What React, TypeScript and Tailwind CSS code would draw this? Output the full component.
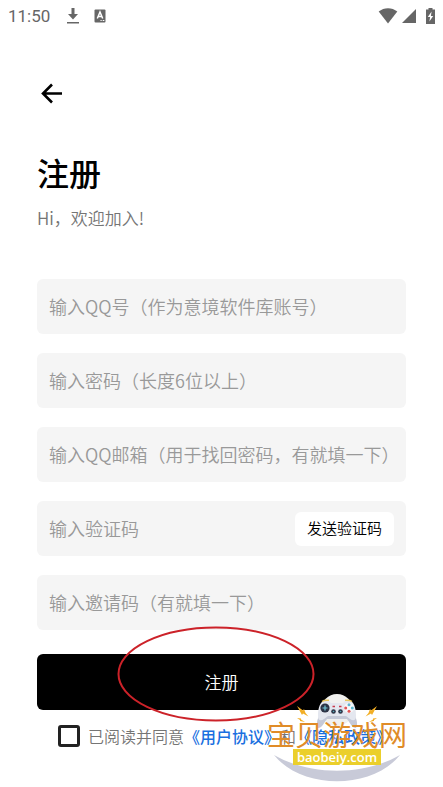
import { useState } from 'react'

const fields = [
  { id: "qq", type: "text", placeholder: "输入QQ号（作为意境软件库账号）" },
  { id: "password", type: "password", placeholder: "输入密码（长度6位以上）" },
  { id: "email", type: "email", placeholder: "输入QQ邮箱（用于找回密码，有就填一下）" },
  { id: "code", type: "text", placeholder: "输入验证码", action: "发送验证码" },
  { id: "invite", type: "text", placeholder: "输入邀请码（有就填一下）" },
]

function StatusBar() {
  return (
    <div className="flex h-8 items-center justify-between px-2 font-[Roboto,sans-serif] text-[#666666]">
      <div className="flex items-center">
        <span className="text-[17px] leading-5">11:50</span>
        <svg className="ml-4 h-4 w-3.5" viewBox="0 0 14 16" fill="currentColor">
          <path d="M5.5 0h3v6H12L7 11.5 2 6h3.5zM1 14h12v1.6H1z" />
        </svg>
        <svg className="ml-3.5 h-3.5 w-3" viewBox="0 0 12 14">
          <rect x="0.5" y="0.5" width="11" height="13" rx="1" fill="currentColor" />
          <path d="M3.3 9.5 6 3l2.7 6.5M4.3 7.4h3.4" fill="none" stroke="#fff" strokeWidth="1.5" />
          <path d="M6.5 11.5h1.2M8.7 11.5h1.6" stroke="#fff" strokeWidth="1" />
        </svg>
      </div>
      <div className="flex items-center">
        <svg className="h-4 w-5" viewBox="0 0 20 16" fill="currentColor">
          <path d="M0.7 3.6C6-1 14-1 19.3 3.6L10 15.4z" />
        </svg>
        <svg className="ml-1 h-3.5 w-3.5" viewBox="0 0 14 14" fill="currentColor">
          <path d="M14 0v14H0z" />
        </svg>
        <svg className="ml-2.5 h-4 w-[9px]" viewBox="0 0 9 16">
          <path d="M2.5 0h4v1.6H9V16H0V1.6h2.5z" fill="currentColor" />
          <path d="M5.6 3.6 1.8 9h2.3l-.7 4.4L7.2 8H4.9z" fill="#fff" />
        </svg>
      </div>
    </div>
  )
}

function Gamepad() {
  return (
    <svg className="h-10 w-20" viewBox="0 0 80 40">
      {/* Sparks */}
      <g fill="#f2ae24">
        <path d="m0 12 6 4.5 1-1.5 1.5 4 3 3.5-5.500-3-1 1.5zM0 24l4 .5v1l4 2.5-5-1v-1z" />
        <path d="m80 12-6 4.5-1-1.5-1.5 4-3 3.5 5.5-3 1 1.5zM80 24l-4 .5v1l-4 2.5 5-1v-1z" />
      </g>
      <ellipse cx="40" cy="16" rx="16" ry="16" fill="#f1f1ef" />
      <path d="M22 22c-2 4-3 9-1 12 4 0 6-5 9-9h20c3 4 5 9 9 9 2-3 1-8-1-12l-4-8H26z" fill="#c5c9d7" />
      <path d="M26 7h6l2 2h12l2-2h6c4 3 5 9 5 15 0 5-3 5-6 3l-4-3H31l-4 3c-3 2-6 2-6-3 0-6 1-12 5-15z" fill="#e4e7ef" />
      <path d="M25 7.5c2-1.500 4-1.500 7-1.2M55 7.5c-2-1.500-4-1.500-7-1.2" stroke="#e9c65b" strokeWidth="1.4" fill="none" />
      <circle cx="28" cy="14" r="4.6" fill="#2d3446" />
      <path d="M28 11.5v5M25.5 14h5" stroke="#73c6d6" strokeWidth="1.2" />
      <circle cx="52" cy="14" r="5" fill="#f7f8fa" />
      <circle cx="52" cy="10.7" r="1.5" fill="#5bb7d0" />
      <circle cx="52" cy="17.3" r="1.5" fill="#e25555" />
      <circle cx="48.7" cy="14" r="1.5" fill="#e25555" />
      <circle cx="55.3" cy="14" r="1.5" fill="#5bb7d0" />
      <path d="M35.5 12.5H38M42 12.5h2.5" stroke="#c93b4c" strokeWidth="1.4" />
      <circle cx="36.5" cy="17.5" r="2.3" fill="#2d3446" />
      <circle cx="43.5" cy="17.5" r="2.3" fill="#2d3446" />
      <circle cx="36.5" cy="17.5" r="0.8" fill="#55a9b9" />
      <circle cx="43.5" cy="17.5" r="0.8" fill="#55a9b9" />
    </svg>
  )
}

function Watermark() {
  return (
    <div className="pointer-events-none absolute right-0 -top-[30px] flex w-[138px] flex-col items-center">
      <Gamepad />
      <svg className="absolute top-[61px] left-1.5 h-7 w-[126px]" viewBox="0 0 126 28">
        <path d="M0 0C36 21 90 21 126 0 98 35 28 35 0 0z" fill="#c8cad8" />
      </svg>
      <span className="relative -mt-4 whitespace-nowrap text-[28px] leading-8 text-[#e08c28]">宝贝游戏网</span>
      <span className="relative -mt-px bg-[#ebcf2b] px-1 font-['Open_Sans','Noto_Sans',sans-serif] text-[13px] leading-4 font-semibold text-white">
        baobeiy.com
      </span>
    </div>
  )
}

export default function App() {
  const [agreed, setAgreed] = useState(false)

  return (
    <main className="min-h-screen bg-white font-['Noto_Sans_CJK_SC',sans-serif]">
      <StatusBar />
      <div className="px-[37px] pt-12">
        <button type="button" aria-label="返回" className="block h-7 w-7">
          <svg className="h-7 w-7" viewBox="0 0 28 28" fill="none" stroke="#000" strokeWidth="2.6">
            <path d="M25 13.5H6.5M15 4.5l-9 9 9 9" />
          </svg>
        </button>

        <h1 className="mt-11 text-[32px] leading-10 font-medium text-black">注册</h1>
        <p className="mt-3.5 text-[17px] leading-6 font-[350] text-[#757575]">Hi，欢迎加入!</p>

        <form className="mt-[49px]" onSubmit={(e) => e.preventDefault()}>
          <div className="flex flex-col gap-[19px]">
            {fields.map((field) => (
              <div key={field.id} className="flex h-[55px] items-center rounded-md bg-[#f5f5f5] pl-3">
                <input
                  id={field.id}
                  type={field.type}
                  aria-label={field.placeholder}
                  placeholder={field.placeholder}
                  className="h-full min-w-0 flex-1 bg-transparent pb-0.5 text-lg font-[350] text-black outline-none placeholder:text-[#999999]"
                />
                {field.action && (
                  <button type="button" className="mr-3 h-[34px] rounded-md bg-white px-3 text-[15px] font-[350] text-black">
                    {field.action}
                  </button>
                )}
              </div>
            ))}
          </div>

          <div className="relative mt-6">
            <button type="submit" className="block h-14 w-full rounded-md bg-black text-[17px] font-[350] text-white">
              注册
            </button>
            <svg className="pointer-events-none absolute -top-7 left-20 h-24 w-[198px]" viewBox="0 0 198 96" fill="none">
              <ellipse cx="99" cy="48" rx="97.5" ry="46.5" stroke="#cc2229" strokeWidth="2" />
            </svg>
          </div>

          <div className="relative mt-3.5 flex items-center pl-[21px]">
            <input
              id="agree"
              type="checkbox"
              checked={agreed}
              onChange={(e) => setAgreed(e.target.checked)}
              className="h-[22px] w-[22px] shrink-0 appearance-none rounded-[3px] border-[3px] border-[#222222] bg-white checked:bg-[#222222]"
            />
            <div className="ml-2 whitespace-nowrap text-base leading-6 font-[350] text-[#757575]">
              <label htmlFor="agree">已阅读并同意</label>
              <a href="#terms" className="font-medium text-[#1a6fe0]">《用户协议》</a>
              和
              <a href="#privacy" className="font-medium text-[#1a6fe0]">《隐私政策》</a>
            </div>
            <Watermark />
          </div>
        </form>
      </div>
    </main>
  )
}
